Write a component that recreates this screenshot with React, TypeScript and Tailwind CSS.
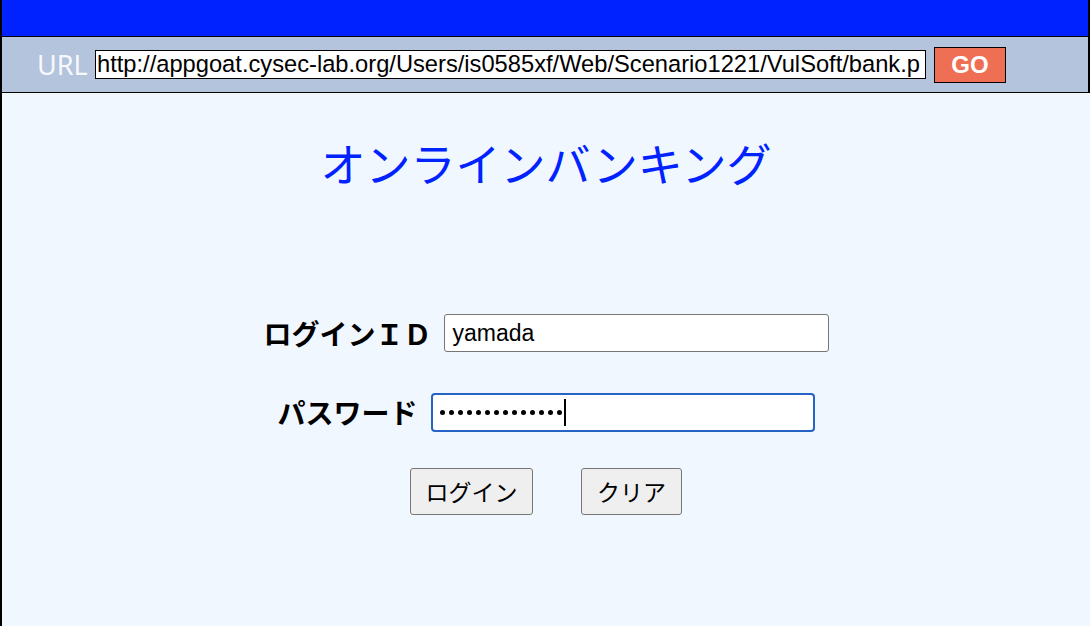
export default function App() {
  const jp = { fontFamily: '"Noto Sans CJK JP", "Noto Sans", sans-serif' };
  const arial = { fontFamily: '"Liberation Sans", Arial, sans-serif' };
  const dots = Array.from({ length: 14 });

  return (
    <div className="w-[1092px] h-[626px] bg-white overflow-hidden">
      <div className="w-[1090px] h-full flex flex-col border-l-2 border-black">
        {/* browser chrome */}
        <div className="h-[37px] bg-[#0022ff] border-b border-r-2 border-black" />
        <div className="h-[56px] flex items-center bg-[#b4c4dc] border-b border-r-2 border-black">
          <span className="ml-[35px] w-[58px] text-[27px] leading-none text-[#f7f9fc]" style={{ fontFamily: '"Noto Sans", sans-serif' }}>
            URL
          </span>
          <div
            className="w-[831px] h-[29px] bg-white border border-black flex items-center pl-[1px] overflow-hidden whitespace-nowrap text-[23.7px] leading-none text-black"
            style={arial}
          >
            http://appgoat.cysec-lab.org/Users/is0585xf/Web/Scenario1221/VulSoft/bank.p
          </div>
          <button
            className="ml-[8px] w-[72px] h-[36px] bg-[#ef6f55] border border-black text-white font-bold text-[24px] leading-none"
            style={arial}
          >
            GO
          </button>
        </div>

        {/* page */}
        <div className="flex-1 bg-[#f0f7ff] flex flex-col items-center" style={jp}>
          <h1 className="mt-[40px] text-[45px] leading-[60px] text-[#0022ff]">オンラインバンキング</h1>

          <div className="mt-[121px] flex items-center gap-[12px]">
            <span className="text-[28px] leading-[38px] font-bold text-black">ログインＩＤ</span>
            <div
              className="w-[385px] h-[38px] bg-white border border-[#767676] rounded-[3px] flex items-center px-[8px] text-[23px] text-black"
              style={arial}
            >
              yamada
            </div>
          </div>

          <div className="mt-[41px] flex items-center gap-[13px]">
            <span className="text-[28px] leading-[39px] font-bold text-black">パスワード</span>
            <div className="w-[384px] h-[39px] bg-white border-2 border-[#2563c6] rounded-[4px] flex items-center pl-[7px]">
              {dots.map((_, i) => (
                <span key={i} className="w-[5px] h-[5px] mr-[4px] rounded-full bg-black" />
              ))}
              <span className="-ml-[2px] w-[2px] h-[27px] bg-black" />
            </div>
          </div>

          <div className="mt-[36px] flex gap-[48px]">
            <button className="w-[123px] h-[47px] bg-[#efefef] border border-[#767676] rounded-[3px] text-[23px] text-black">
              ログイン
            </button>
            <button className="w-[101px] h-[47px] bg-[#efefef] border border-[#767676] rounded-[3px] text-[23px] text-black">
              クリア
            </button>
          </div>
        </div>
      </div>
    </div>
  );
}
